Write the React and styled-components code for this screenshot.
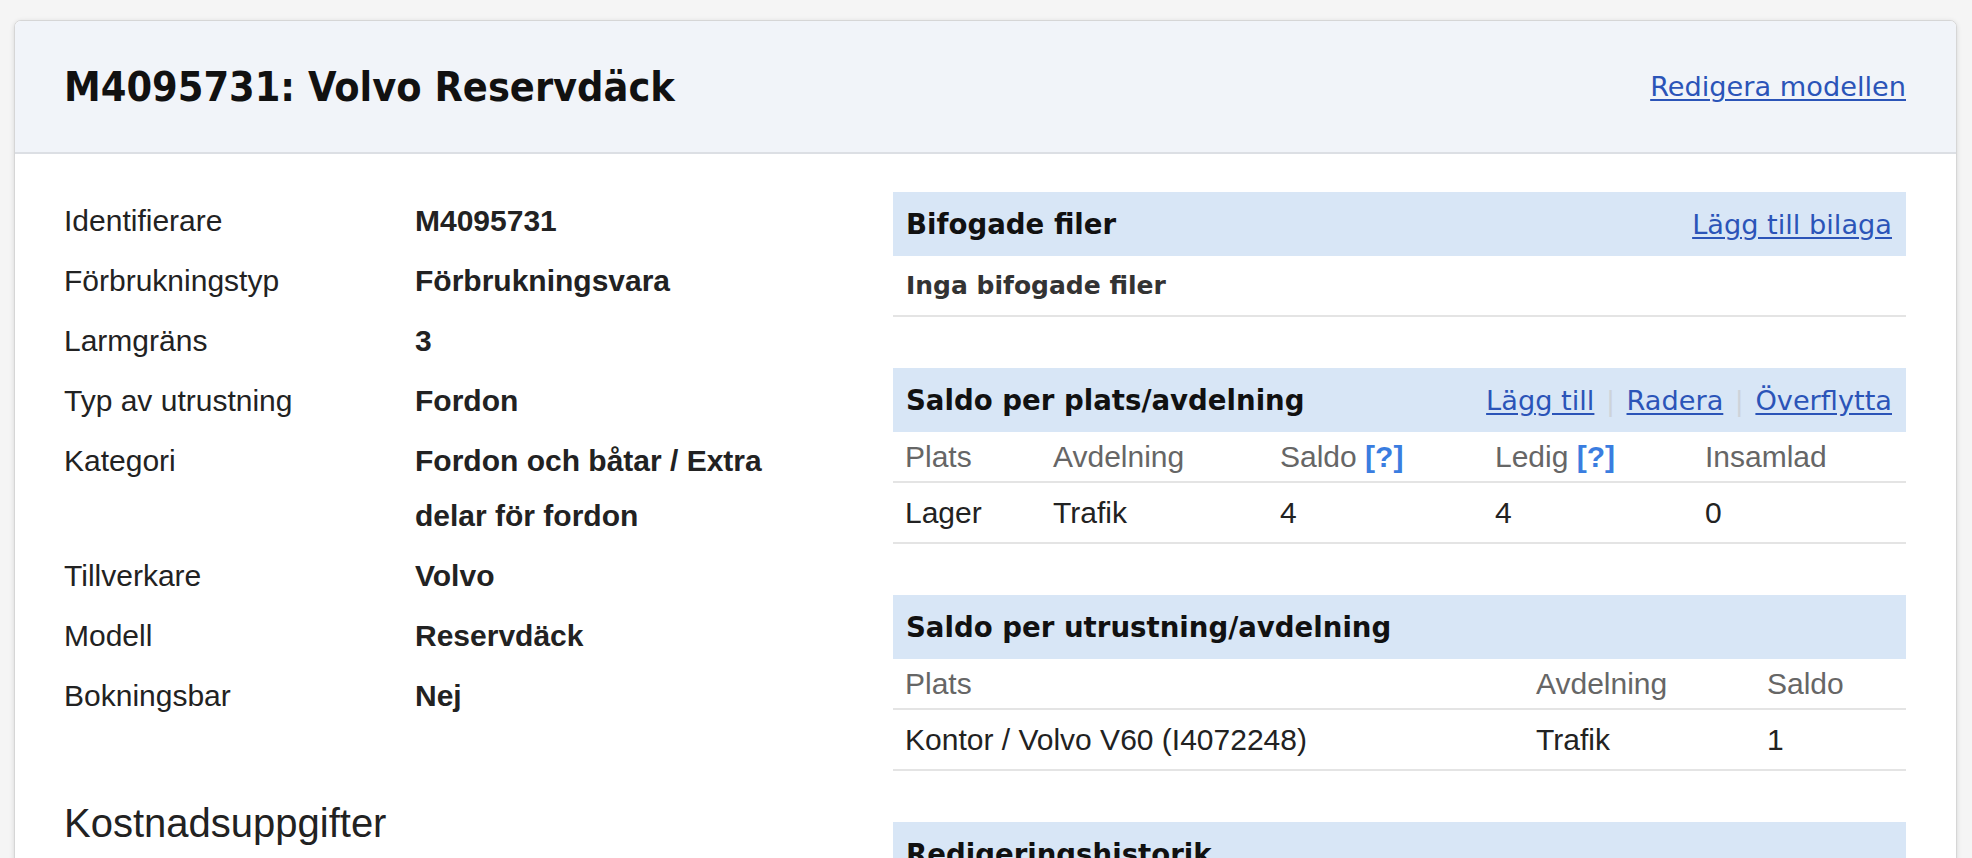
import styled, { createGlobalStyle } from 'styled-components'

const GlobalStyle = createGlobalStyle`
  body {
    margin: 0;
    background: #f5f5f5;
    font-family: "Liberation Sans", Arial, sans-serif;
    color: #222;
  }
`

const Page = styled.div`
  padding: 20px 15px 0 14px;
`

const Card = styled.div`
  background: #fff;
  border: 1px solid #d6d6d6;
  border-radius: 7px;
  box-shadow: 0 1px 5px rgba(0, 0, 0, 0.12);
  overflow: hidden;
`

const CardHeader = styled.div`
  display: flex;
  align-items: center;
  justify-content: space-between;
  height: 131px;
  padding: 0 50px 0 49px;
  background: #f1f4f9;
  border-bottom: 2px solid #dcdfe4;
`

const Title = styled.h1`
  margin: 0;
  font-family: "DejaVu Sans Condensed", "DejaVu Sans", sans-serif;
  font-stretch: condensed;
  font-weight: bold;
  font-size: 41px;
  color: #111;
`

/* links in the card header and in the panel headers */
const A = styled.a`
  font-family: "DejaVu Sans", sans-serif;
  font-size: 27.2px;
  color: #2b54b8;
  text-decoration: underline;
  text-underline-offset: 3px;
  cursor: pointer;
`

const Body = styled.div`
  display: grid;
  grid-template-columns: minmax(0, 1fr) 1013px;
  column-gap: 80px;
  padding: 36px 50px 80px 49px;
`

const InfoList = styled.dl`
  display: grid;
  grid-template-columns: 351px 1fr;
  margin: 0;
  font-size: 30px;
`

const Term = styled.dt`
  padding: 2.5px 0;
  line-height: 55px;
  color: #222;
`

const Value = styled.dd`
  margin: 0;
  padding: 2.5px 0;
  line-height: 55px;
  font-weight: bold;
  color: #222;
`

const SectionTitle = styled.h2`
  margin: 75px 0 0;
  font-size: 40px;
  line-height: 46px;
  font-weight: normal;
  color: #222;
`

const RightCol = styled.div`
  padding-top: 2px;
`

const Panel = styled.section`
  margin-bottom: 51px;
`

const PanelHeader = styled.div`
  display: flex;
  align-items: center;
  justify-content: space-between;
  height: 64px;
  padding: 0 14px 0 13px;
  background: #d8e6f6;
`

const PanelTitle = styled.h3`
  margin: 0;
  font-family: "DejaVu Sans", sans-serif;
  font-weight: bold;
  font-size: 27.6px;
  color: #111;
`

const Actions = styled.div`
  display: flex;
  align-items: center;
`

const Sep = styled.span`
  margin: 0 11.5px;
  font-family: "DejaVu Sans", sans-serif;
  font-size: 27px;
  color: #cdd3da;
`

const EmptyRow = styled.div`
  height: 59px;
  display: flex;
  align-items: center;
  padding-left: 13px;
  border-bottom: 2px solid #e4e4e4;
  font-family: "DejaVu Sans", sans-serif;
  font-weight: bold;
  font-size: 25px;
  color: #333;
`

const Table = styled.table`
  width: 100%;
  table-layout: fixed;
  border-collapse: collapse;
  font-size: 30px;
`

const Col = styled.col`
  width: ${props => props.w}px;
`

const Th = styled.th`
  height: 49px;
  padding: 0 0 0 12px;
  text-align: left;
  font-weight: normal;
  color: #666;
  border-bottom: 2px solid #e4e4e4;
  white-space: nowrap;
`

const Td = styled.td`
  height: 59px;
  padding: 0 0 0 12px;
  color: #222;
  border-bottom: 2px solid #e4e4e4;
  white-space: nowrap;
`

const Help = styled.a`
  font-weight: bold;
  color: #3a7de0;
  text-decoration: none;
  cursor: help;
`

const info = [
  ['Identifierare', 'M4095731'],
  ['Förbrukningstyp', 'Förbrukningsvara'],
  ['Larmgräns', '3'],
  ['Typ av utrustning', 'Fordon'],
  ['Kategori', 'Fordon och båtar / Extra delar för fordon'],
  ['Tillverkare', 'Volvo'],
  ['Modell', 'Reservdäck'],
  ['Bokningsbar', 'Nej']
]

const App = () => (
  <Page>
    <GlobalStyle />
    <Card>
      <CardHeader>
        <Title>M4095731: Volvo Reservdäck</Title>
        <A>Redigera modellen</A>
      </CardHeader>
      <Body>
        <div>
          <InfoList>
            {info.map(([k, v]) => (
              <>
                <Term key={k}>{k}</Term>
                <Value key={k + 'v'}>{v}</Value>
              </>
            ))}
          </InfoList>
          <SectionTitle>Kostnadsuppgifter</SectionTitle>
        </div>
        <RightCol>
          <Panel>
            <PanelHeader>
              <PanelTitle>Bifogade filer</PanelTitle>
              <A>Lägg till bilaga</A>
            </PanelHeader>
            <EmptyRow>Inga bifogade filer</EmptyRow>
          </Panel>

          <Panel>
            <PanelHeader>
              <PanelTitle>Saldo per plats/avdelning</PanelTitle>
              <Actions>
                <A>Lägg till</A>
                <Sep>|</Sep>
                <A>Radera</A>
                <Sep>|</Sep>
                <A>Överflytta</A>
              </Actions>
            </PanelHeader>
            <Table>
              <colgroup>
                <Col w={148} />
                <Col w={227} />
                <Col w={215} />
                <Col w={210} />
                <Col w={213} />
              </colgroup>
              <thead>
                <tr>
                  <Th>Plats</Th>
                  <Th>Avdelning</Th>
                  <Th>Saldo <Help>[?]</Help></Th>
                  <Th>Ledig <Help>[?]</Help></Th>
                  <Th>Insamlad</Th>
                </tr>
              </thead>
              <tbody>
                <tr>
                  <Td>Lager</Td>
                  <Td>Trafik</Td>
                  <Td>4</Td>
                  <Td>4</Td>
                  <Td>0</Td>
                </tr>
              </tbody>
            </Table>
          </Panel>

          <Panel>
            <PanelHeader>
              <PanelTitle>Saldo per utrustning/avdelning</PanelTitle>
            </PanelHeader>
            <Table>
              <colgroup>
                <Col w={631} />
                <Col w={231} />
                <Col w={151} />
              </colgroup>
              <thead>
                <tr>
                  <Th>Plats</Th>
                  <Th>Avdelning</Th>
                  <Th>Saldo</Th>
                </tr>
              </thead>
              <tbody>
                <tr>
                  <Td>Kontor / Volvo V60 (I4072248)</Td>
                  <Td>Trafik</Td>
                  <Td>1</Td>
                </tr>
              </tbody>
            </Table>
          </Panel>

          <Panel>
            <PanelHeader>
              <PanelTitle>Redigeringshistorik</PanelTitle>
            </PanelHeader>
            <EmptyRow>Ingen historik</EmptyRow>
          </Panel>
        </RightCol>
      </Body>
    </Card>
  </Page>
)

export default App
